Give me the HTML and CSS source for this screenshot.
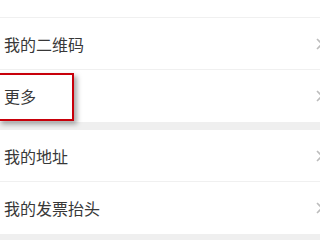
FILE: index.html
```html
<!DOCTYPE html>
<html lang="zh-CN">
<head>
    <meta charset="UTF-8">
    <meta name="viewport" content="width=device-width, initial-scale=1.0">
    <title>我的</title>
    <link rel="stylesheet" href="styles.css">
</head>
<body>

    <div class="group">
        <div class="row row-tail"></div>
        <div class="row">
            <span class="row-title">我的二维码</span>
            <svg class="chevron" width="10" height="14" viewBox="0 0 10 14"><path d="M2 2 L7 7 L2 12" fill="none" stroke="#bdbdbd" stroke-width="1.6"/></svg>
        </div>
        <div class="row row-marked">
            <span class="row-title">更多</span>
            <svg class="chevron" width="10" height="14" viewBox="0 0 10 14"><path d="M2 2 L7 7 L2 12" fill="none" stroke="#bdbdbd" stroke-width="1.6"/></svg>
            <div class="mark-box"></div>
        </div>
    </div>

    <div class="group">
        <div class="row">
            <span class="row-title">我的地址</span>
            <svg class="chevron" width="10" height="14" viewBox="0 0 10 14"><path d="M2 2 L7 7 L2 12" fill="none" stroke="#bdbdbd" stroke-width="1.6"/></svg>
        </div>
        <div class="row">
            <span class="row-title">我的发票抬头</span>
            <svg class="chevron" width="10" height="14" viewBox="0 0 10 14"><path d="M2 2 L7 7 L2 12" fill="none" stroke="#bdbdbd" stroke-width="1.6"/></svg>
        </div>
    </div>

</body>
</html>
```

FILE: styles.css
```css
body {
    margin: 0;
    background-color: #efefef;
    font-family: "Noto Sans CJK SC", "Noto Sans", sans-serif;
    overflow: hidden;
}
.group {
    background-color: #fff;
    margin-bottom: 8px;
}
.row {
    height: 51px;
    display: flex;
    align-items: center;
    justify-content: space-between;
    padding-left: 4px;
    border-bottom: 1px solid #f0f0f0;
}
.row:last-child {
    height: 52px;
    border-bottom: none;
}
.row-tail {
    height: 17px;
}
.row-title {
    font-size: 16px;
    color: #383838;
}
.chevron {
    margin-right: -5px;
}
.row-marked {
    position: relative;
}
.mark-box {
    position: absolute;
    left: -2px;
    top: 3px;
    width: 72px;
    height: 44px;
    border: 2px solid #c8000a;
    box-shadow: 3px 3px 5px rgba(0, 0, 0, 0.35);
}
```
